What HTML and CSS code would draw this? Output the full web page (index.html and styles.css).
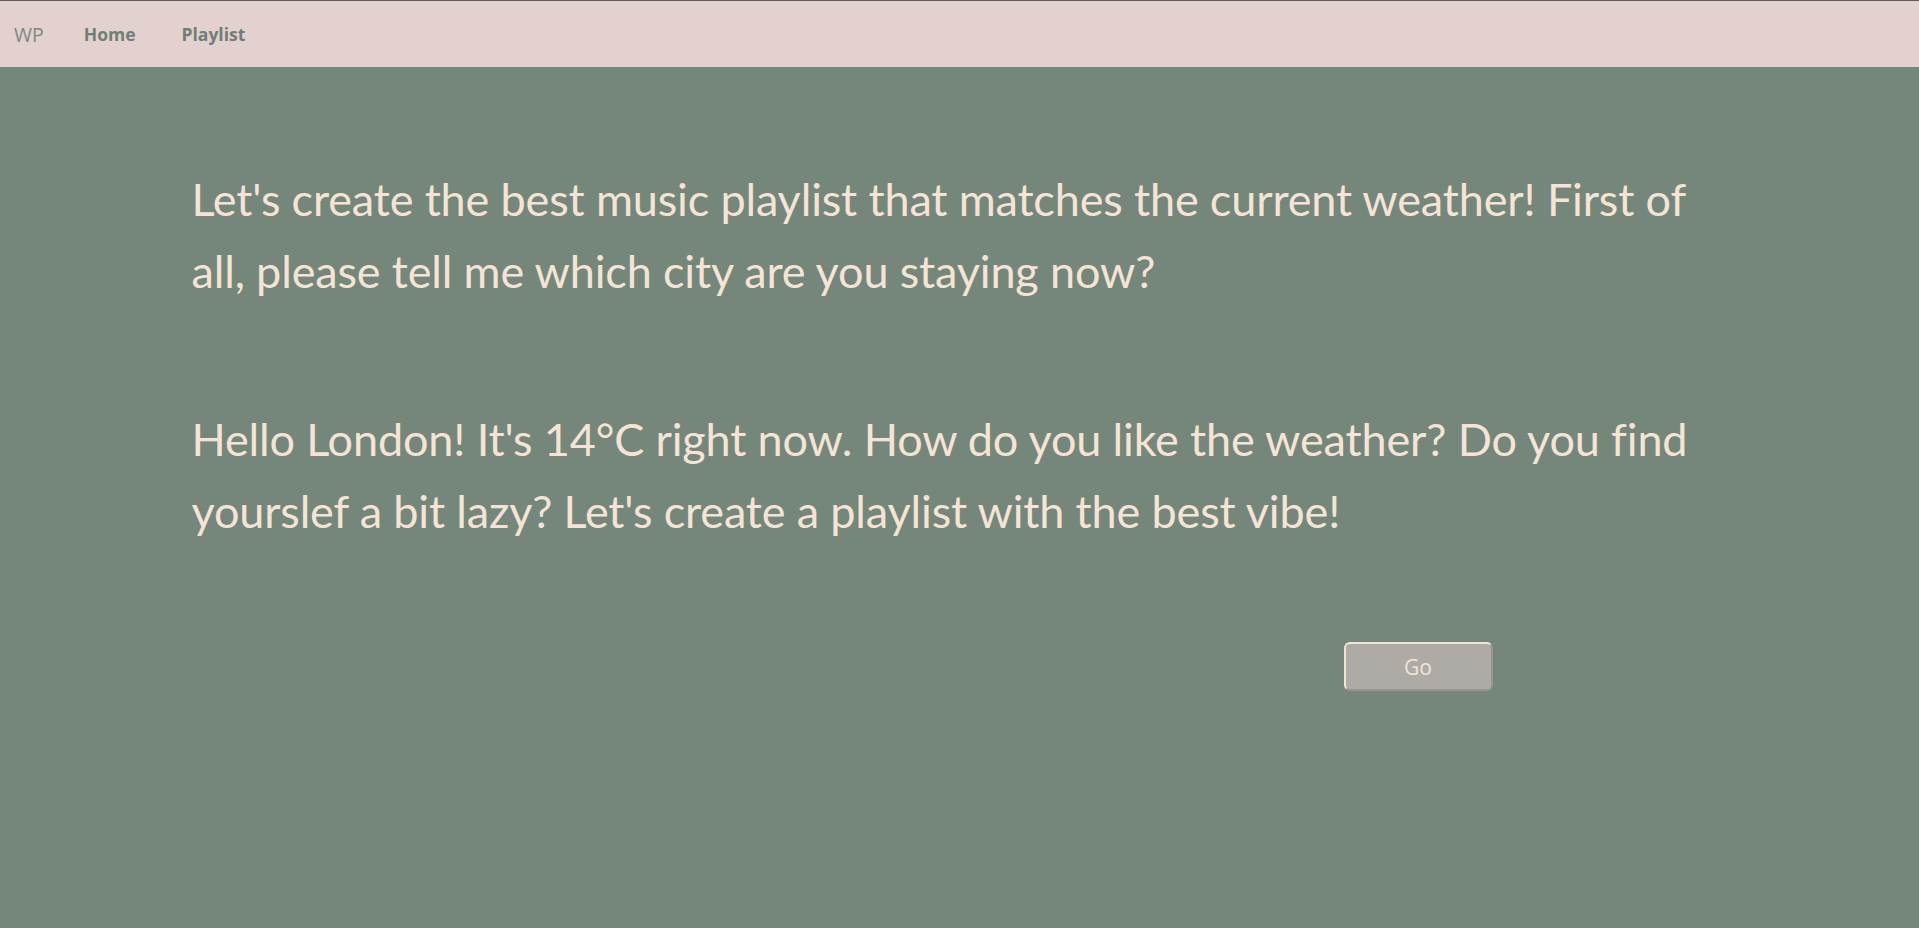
FILE: index.html
```html
<!DOCTYPE html>
<html lang="en">
<head>
<meta charset="utf-8">
<title>Weather Playlist</title>
<link rel="stylesheet" href="styles.css">
</head>
<body>
<nav class="nav">
  <span class="brand">WP</span>
  <a class="nav-link" href="#">Home</a>
  <a class="nav-link" href="#">Playlist</a>
</nav>
<main class="content">
  <p class="message">Let's create the best music playlist that matches the current weather! First of all, please tell me which city are you staying now?</p>
  <p class="message second">Hello London! It's 14°C right now. How do you like the weather? Do you find yourslef a bit lazy? Let's create a playlist with the best vibe!</p>
  <div class="actions">
    <button class="go-btn" type="button">Go</button>
  </div>
</main>
</body>
</html>
```
FILE: styles.css
```css
html, body {
  margin: 0;
  padding: 0;
}
body {
  background: #74877a;
  min-height: 928px;
  font-family: "Open Sans", "Noto Sans", sans-serif;
}
.nav {
  border-top: 1px solid #5b5b5b;
  background: #e3d1d0;
  display: flex;
  align-items: center;
  padding-left: 14px;
  box-sizing: border-box;
  height: 67px;
}
.brand {
  color: #7c8a82;
  font-size: 19.5px;
  margin-right: 40px;
}
.nav-link {
  color: #6e8075;
  font-weight: 700;
  font-size: 17.5px;
  text-decoration: none;
  margin-right: 46px;
}
.content {
  width: 1536px;
  margin: 0 auto;
  padding-top: 96px;
}
.message {
  margin: 0;
  color: #f5e4d5;
  font-family: "Lato", sans-serif;
  font-size: 45px;
  letter-spacing: -0.15px;
  line-height: 72px;
}
.second {
  margin-top: 96px;
}
.actions {
  display: flex;
  justify-content: flex-end;
  padding-right: 235px;
  margin-top: 95px;
}
.go-btn {
  width: 149px;
  height: 49px;
  background: #aeaba6;
  color: #f5e4d5;
  font-family: "Open Sans", sans-serif;
  font-size: 21px;
  border: 2px solid #f3e4d6;
  border-right-color: #9d958c;
  border-bottom-color: #9d958c;
  border-radius: 6px;
  padding: 0;
}
```
